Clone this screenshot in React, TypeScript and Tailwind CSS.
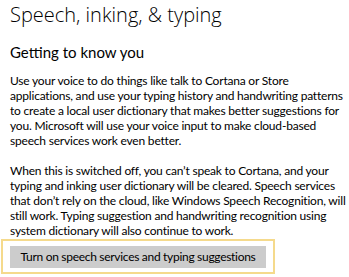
export default function App() {
  return (
    <div
      className="w-[349px] h-[277px] bg-white overflow-hidden text-black relative"
      style={{ fontFamily: 'Lato, "Open Sans", sans-serif' }}
    >
      <div className="pl-[10px]">
        <h1
          className="text-[20px] font-light leading-[24px] pt-[3px] whitespace-nowrap"
          style={{ fontFamily: '"Open Sans", sans-serif' }}
        >
          Speech, inking, &amp; typing
        </h1>
        <h2 className="text-[15px] leading-[20px] mt-[15px] whitespace-nowrap">Getting to know you</h2>
        <p className="mt-[11px] text-[12px] leading-[15px] tracking-[-0.2px] whitespace-nowrap">
          Use your voice to do things like talk to Cortana or Store
          <br />
          applications, and use your typing history and handwriting patterns
          <br />
          to create a local user dictionary that makes better suggestions for
          <br />
          you. Microsoft will use your voice input to make cloud-based
          <br />
          speech services work even better.
        </p>
        <p className="mt-[15px] text-[12px] leading-[15px] tracking-[-0.2px] whitespace-nowrap">
          When this is switched off, you can’t speak to Cortana, and your
          <br />
          typing and inking user dictionary will be cleared. Speech services
          <br />
          that don’t rely on the cloud, like Windows Speech Recognition, will
          <br />
          still work. Typing suggestion and handwriting recognition using
          <br />
          system dictionary will also continue to work.
        </p>
      </div>
      <div className="ml-[1px] mt-[1px] w-[274px] border-2 border-[#f5da8c] px-[7px] pt-[5px] pb-[4px]">
        <div className="bg-[#cccccc] h-[22px] flex items-center justify-center text-[12px] tracking-[-0.3px] whitespace-nowrap">
          Turn on speech services and typing suggestions
        </div>
      </div>
    </div>
  );
}
